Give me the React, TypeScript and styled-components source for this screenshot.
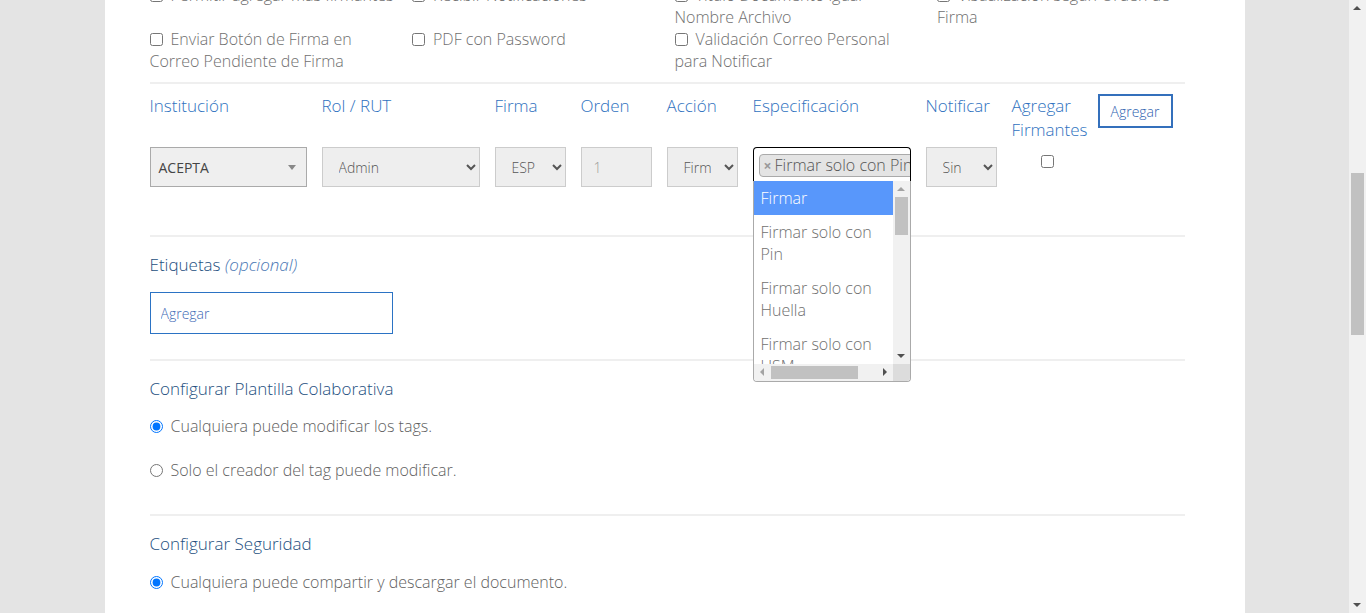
import React from 'react';
import styled, { createGlobalStyle } from 'styled-components';

const GlobalStyle = createGlobalStyle`
  html, body { margin: 0; padding: 0; height: 100%; overflow: hidden; }
  body { font-family: "Open Sans", "Noto Sans", sans-serif; font-weight: 300; background: #e4e4e4; }
  *, *::before, *::after { box-sizing: border-box; }
`;

const Screen = styled.div`
  display: flex;
  height: 613px;
  overflow: hidden;
`;

const Main = styled.main`
  flex: 1;
  min-width: 0;
  background: #e4e4e4;
  overflow: hidden;
`;

const Panel = styled.div`
  width: 1140px;
  min-height: 613px;
  margin: 0 auto;
  background: #fff;
  padding: 0 60px 40px 45px;
`;

const OptionGrid = styled.div`
  display: grid;
  grid-template-columns: repeat(4, 247.5px);
  grid-auto-rows: 44px;
  column-gap: 15px;
  margin-top: -16px;
`;

const OptionLabel = styled.label`
  font-size: 16px;
  line-height: 22px;
  color: #6f6f6f;
`;

const Check = styled.input.attrs({ type: 'checkbox' })<{ $bare?: boolean }>`
  width: 13px;
  height: 13px;
  margin: 0 ${(p) => (p.$bare ? 0 : 8)}px 0 0;
  vertical-align: -1px;
`;

const Divider = styled.hr<{ $top: number }>`
  border: 0;
  border-top: 2px solid #efefef;
  margin: ${(p) => p.$top}px 0 0;
`;

const SignerGrid = styled.div`
  display: grid;
  grid-template-columns: 157px 158px 71px 71px 71px 158px 71px 71px auto;
  column-gap: 15px;
  margin-top: 10px;
  align-items: start;
`;

const Field = styled.div`
  display: flex;
  flex-direction: column;
  gap: 5px;
  position: relative;
`;

const FieldLabel = styled.div`
  min-height: 48px;
  font-size: 17px;
  line-height: 24px;
  color: #2f72c0;
`;

const Select2Single = styled.div`
  height: 40px;
  display: flex;
  align-items: center;
  justify-content: space-between;
  padding: 0 8px 0 8px;
  background: #efefef;
  border: 1px solid #aaa;
  font-size: 14px;
  font-weight: 400;
  color: #444;
`;

const Caret = styled.span`
  width: 0;
  height: 0;
  margin-right: 2px;
  border-top: 5px solid #888;
  border-left: 4px solid transparent;
  border-right: 4px solid transparent;
`;

const NativeSelect = styled.select`
  width: 100%;
  height: 40px;
  padding: 0 10px 0 12px;
  background: #eee;
  border: 1px solid #ccc;
  border-radius: 0;
  font-family: "Open Sans", "Noto Sans", sans-serif;
  font-weight: 300;
  font-size: 14px;
  color: #555;
`;

const NumberInput = styled.input`
  width: 100%;
  height: 40px;
  padding: 0 12px;
  background: #eee;
  border: 1px solid #ccc;
  font-family: "Open Sans", "Noto Sans", sans-serif;
  font-weight: 300;
  font-size: 14px;
  color: #999;
`;

const MultiBox = styled.div`
  height: 34px;
  border: 1px solid #000;
  border-bottom: 0;
  border-radius: 4px 4px 0 0;
  background: #fff;
  padding: 6px 0 0 5px;
  overflow: hidden;
  white-space: nowrap;
`;

const Tag = styled.span`
  display: inline-flex;
  align-items: center;
  height: 23px;
  padding: 0 5px 0 4px;
  background: #e4e4e4;
  border: 1px solid #aaa;
  border-radius: 4px;
  font-size: 16px;
  line-height: 21px;
  color: #555;
`;

const TagRemove = styled.span`
  color: #999;
  font-weight: 700;
  font-size: 14px;
  margin-right: 3px;
`;

const Dropdown = styled.div`
  position: absolute;
  top: 87px;
  left: 0;
  width: 158px;
  height: 201px;
  display: grid;
  grid-template-columns: 1fr 17px;
  grid-template-rows: 1fr 17px;
  background: #fff;
  border: 1px solid #aaa;
  border-top: 0;
  border-radius: 0 0 4px 4px;
  overflow: hidden;
  z-index: 5;
`;

const ResultViewport = styled.div`
  overflow: hidden;
`;

const ResultList = styled.ul`
  list-style: none;
  margin: 0;
  padding: 0;
`;

const Result = styled.li<{ $active?: boolean }>`
  padding: 6px 7px;
  font-size: 16px;
  line-height: 22px;
  color: ${(p) => (p.$active ? '#fff' : '#6f6f6f')};
  background: ${(p) => (p.$active ? '#5897fb' : 'transparent')};
`;

const Track = styled.div`
  position: relative;
  background: #f1f1f1;
`;

const Corner = styled.div`
  background: #dcdcdc;
`;

const Arrow = styled.span<{ $dir: 'up' | 'down' | 'left' | 'right'; $dim?: boolean }>`
  position: absolute;
  width: 0;
  height: 0;
  ${(p) => {
    const c = p.$dim ? '#a3a3a3' : '#505050';
    switch (p.$dir) {
      case 'up':
        return `top: 6px; left: 4px; border-left: 4px solid transparent; border-right: 4px solid transparent; border-bottom: 4px solid ${c};`;
      case 'down':
        return `bottom: 6px; left: 4px; border-left: 4px solid transparent; border-right: 4px solid transparent; border-top: 4px solid ${c};`;
      case 'left':
        return `left: 6px; top: 4px; border-top: 4px solid transparent; border-bottom: 4px solid transparent; border-right: 4px solid ${c};`;
      default:
        return `right: 6px; top: 4px; border-top: 4px solid transparent; border-bottom: 4px solid transparent; border-left: 4px solid ${c};`;
    }
  }}
`;

const Thumb = styled.span<{ $horizontal?: boolean }>`
  position: absolute;
  background: #c1c1c1;
  ${(p) =>
    p.$horizontal
      ? 'top: 2px; bottom: 2px; left: 17px; width: 87px;'
      : 'left: 2px; right: 2px; top: 16px; height: 38px;'}
`;

const CheckCell = styled.div`
  display: flex;
  justify-content: center;
  padding-top: 8px;
`;

const OutlineButton = styled.button`
  width: 75px;
  height: 34px;
  padding: 0;
  background: #fff;
  border: 2px solid #3470bc;
  font-family: "Open Sans", "Noto Sans", sans-serif;
  font-weight: 300;
  font-size: 14px;
  color: #2f62b0;
`;

const SectionTitle = styled.div<{ $top: number }>`
  margin-top: ${(p) => p.$top}px;
  font-size: 17px;
  line-height: 24px;
  color: #244f80;
`;

const Optional = styled.em`
  color: #4b78b4;
`;

const TagInput = styled.input`
  display: block;
  margin-top: 15px;
  width: 243px;
  height: 42px;
  padding: 0 10px;
  border: 1px solid #2b73c4;
  font-family: "Open Sans", "Noto Sans", sans-serif;
  font-weight: 300;
  font-size: 14px;
  &::placeholder { color: #3e6ab6; }
`;

const RadioGroup = styled.div<{ $top: number }>`
  display: flex;
  flex-direction: column;
  gap: 22px;
  margin-top: ${(p) => p.$top}px;
`;

const RadioLabel = styled.label`
  font-size: 16px;
  line-height: 22px;
  color: #5f5f5f;
`;

const Radio = styled.input.attrs({ type: 'radio' })`
  width: 13px;
  height: 13px;
  margin: 0 8px 0 0;
  vertical-align: -1px;
`;

const PageScrollbar = styled.div`
  width: 17px;
  flex-shrink: 0;
  background: #f1f1f1;
  position: relative;
`;

const PageThumb = styled.span`
  position: absolute;
  left: 2px;
  right: 2px;
  top: 173px;
  height: 162px;
  background: #c1c1c1;
`;

const options: string[] = [
  'Permitir agregar más firmantes',
  'Recibir Notificaciones',
  'Título Documento igual Nombre Archivo',
  'Visualización según Orden de Firma',
  'Enviar Botón de Firma en Correo Pendiente de Firma',
  'PDF con Password',
  'Validación Correo Personal para Notificar',
];

const results = [
  'Firmar',
  'Firmar solo con Pin',
  'Firmar solo con Huella',
  'Firmar solo con USM',
  'Firmar solo con Token',
];

export default function App() {
  return (
    <>
      <GlobalStyle />
      <Screen>
        <Main>
          <Panel>
            <OptionGrid>
              {options.map((text) => (
                <OptionLabel key={text}>
                  <Check />
                  {text}
                </OptionLabel>
              ))}
            </OptionGrid>

            <Divider $top={10} />

            <SignerGrid>
              <Field>
                <FieldLabel>Institución</FieldLabel>
                <Select2Single>
                  <span>ACEPTA</span>
                  <Caret />
                </Select2Single>
              </Field>
              <Field>
                <FieldLabel>Rol / RUT</FieldLabel>
                <NativeSelect defaultValue="Admin">
                  <option>Admin</option>
                </NativeSelect>
              </Field>
              <Field>
                <FieldLabel>Firma</FieldLabel>
                <NativeSelect defaultValue="ESP">
                  <option>ESP</option>
                </NativeSelect>
              </Field>
              <Field>
                <FieldLabel>Orden</FieldLabel>
                <NumberInput defaultValue="1" disabled />
              </Field>
              <Field>
                <FieldLabel>Acción</FieldLabel>
                <NativeSelect defaultValue="Firmar">
                  <option>Firmar</option>
                </NativeSelect>
              </Field>
              <Field>
                <FieldLabel>Especificación</FieldLabel>
                <MultiBox>
                  <Tag>
                    <TagRemove>×</TagRemove>
                    Firmar solo con Pin
                  </Tag>
                </MultiBox>
                <Dropdown>
                  <ResultViewport>
                    <ResultList>
                      {results.map((r, i) => (
                        <Result key={r} $active={i === 0}>
                          {r}
                        </Result>
                      ))}
                    </ResultList>
                  </ResultViewport>
                  <Track>
                    <Arrow $dir="up" $dim />
                    <Thumb />
                    <Arrow $dir="down" />
                  </Track>
                  <Track>
                    <Arrow $dir="left" $dim />
                    <Thumb $horizontal />
                    <Arrow $dir="right" />
                  </Track>
                  <Corner />
                </Dropdown>
              </Field>
              <Field>
                <FieldLabel>Notificar</FieldLabel>
                <NativeSelect defaultValue="Sin">
                  <option>Sin</option>
                </NativeSelect>
              </Field>
              <Field>
                <FieldLabel>Agregar Firmantes</FieldLabel>
                <CheckCell>
                  <Check $bare />
                </CheckCell>
              </Field>
              <Field>
                <OutlineButton>Agregar</OutlineButton>
              </Field>
            </SignerGrid>

            <Divider $top={48} />

            <SectionTitle $top={16}>
              Etiquetas <Optional>(opcional)</Optional>
            </SectionTitle>
            <TagInput placeholder="Agregar" />

            <Divider $top={25} />

            <SectionTitle $top={16}>Configurar Plantilla Colaborativa</SectionTitle>
            <RadioGroup $top={14}>
              <RadioLabel>
                <Radio name="plantilla" defaultChecked />
                Cualquiera puede modificar los tags.
              </RadioLabel>
              <RadioLabel>
                <Radio name="plantilla" />
                Solo el creador del tag puede modificar.
              </RadioLabel>
            </RadioGroup>

            <Divider $top={33} />

            <SectionTitle $top={16}>Configurar Seguridad</SectionTitle>
            <RadioGroup $top={15}>
              <RadioLabel>
                <Radio name="seguridad" defaultChecked />
                Cualquiera puede compartir y descargar el documento.
              </RadioLabel>
            </RadioGroup>
          </Panel>
        </Main>
        <PageScrollbar>
          <Arrow $dir="up" />
          <PageThumb />
          <Arrow $dir="down" />
        </PageScrollbar>
      </Screen>
    </>
  );
}
